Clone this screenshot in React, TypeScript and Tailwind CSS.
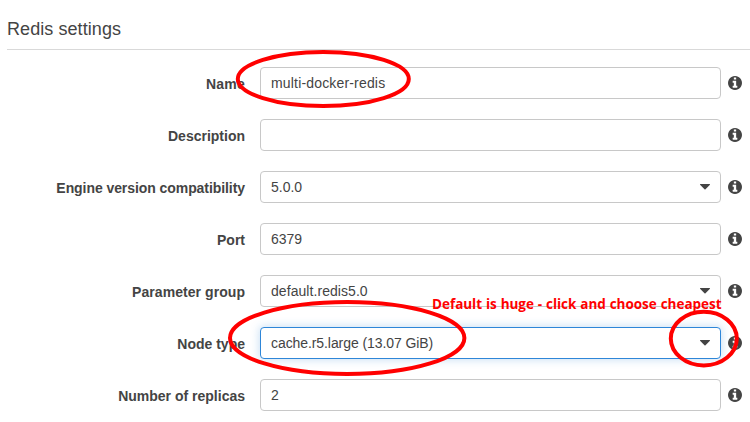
type Field = {
  label: string;
  value: string;
  select?: boolean;
  focused?: boolean;
  labelClass?: string;
  valueClass?: string;
};

const fields: Field[] = [
  { label: "Name", value: "multi-docker-redis", labelClass: "tracking-[0.2px]", valueClass: "tracking-[0.17px]" },
  { label: "Description", value: "" },
  { label: "Engine version compatibility", value: "5.0.0", select: true, labelClass: "tracking-[-0.07px]" },
  { label: "Port", value: "6379" },
  { label: "Parameter group", value: "default.redis5.0", select: true, labelClass: "tracking-[0.06px]", valueClass: "tracking-[0.06px]" },
  { label: "Node type", value: "cache.r5.large (13.07 GiB)", select: true, focused: true, valueClass: "tracking-[-0.08px]" },
  { label: "Number of replicas", value: "2" },
];

function InfoIcon() {
  return (
    <svg className="ml-[7px] shrink-0" width="14" height="14" viewBox="0 0 1536 1536" fill="currentColor">
      <path d="M1024 1248v-160q0-14-9-23t-23-9h-96V544q0-14-9-23t-23-9H544q-14 0-23 9t-9 23v160q0 14 9 23t23 9h96v320h-96q-14 0-23 9t-9 23v160q0 14 9 23t23 9h448q14 0 23-9t9-23zM896 352V192q0-14-9-23t-23-9H672q-14 0-23 9t-9 23v160q0 14 9 23t23 9h192q14 0 23-9t9-23zm640 416q0 209-103 385.500T1153.500 1433 768 1536t-385.500-103T103 1153.500 0 768t103-385.500T382.500 103 768 0t385.500 103T1433 382.500 1536 768z" />
    </svg>
  );
}

function Row({ field }: { field: Field }) {
  const border = field.focused
    ? "border-[#2e86d8] shadow-[0_0_8px_1px_rgba(46,134,216,0.25)]"
    : "border-[#c8c8c8]";
  return (
    <div className="flex h-8 items-center">
      <div className={`w-[245px] shrink-0 pt-[2px] text-right text-sm leading-5 font-bold whitespace-nowrap ${field.labelClass ?? ""}`}>
        {field.label}
      </div>
      <div className={`ml-[15px] flex h-8 w-[461px] shrink-0 items-center justify-between rounded-[4px] border bg-white pr-[10px] pl-[10px] ${border}`}>
        <span className={`text-sm leading-5 whitespace-nowrap ${field.valueClass ?? ""}`}>{field.value}</span>
        {field.select && (
          <svg width="10" height="6" viewBox="0 0 10 6" fill="#444444">
            <path d="M0.3 0H9.7Q10.3 0.4 9.7 1L5.5 5.2Q5 5.7 4.5 5.2L0.3 1Q-0.3 0.4 0.3 0Z" />
          </svg>
        )}
      </div>
      <InfoIcon />
    </div>
  );
}

export default function App() {
  return (
    <div className="relative h-[422px] w-[750px] overflow-hidden bg-white font-['Liberation_Sans',Arial,sans-serif] text-[#444444]">
      <header className="ml-[7px] h-[50px] border-b border-[#d9d9d9] pt-[17px]">
        <h1 className="text-lg leading-6 tracking-[0.07px]">Redis settings</h1>
      </header>
      <main className="flex flex-col gap-5 pt-[17px]">
        {fields.map((field) => (
          <Row key={field.label} field={field} />
        ))}
      </main>
      <svg className="pointer-events-none absolute inset-0" width="750" height="422" fill="none" stroke="#ff0000" strokeWidth="4">
        <ellipse cx="323.3" cy="79" rx="85.5" ry="27" />
        <ellipse cx="347.2" cy="338" rx="117.2" ry="36" />
        <ellipse cx="703.8" cy="338.6" rx="33" ry="26.8" />
      </svg>
      <p className="absolute top-[294px] left-[432px] font-['Open_Sans',sans-serif] text-[13.5px] leading-5 font-bold tracking-[-0.02px] [word-spacing:0.4px] whitespace-nowrap text-[#ff0000]">
        Default is huge - click and choose cheapest
      </p>
    </div>
  );
}
